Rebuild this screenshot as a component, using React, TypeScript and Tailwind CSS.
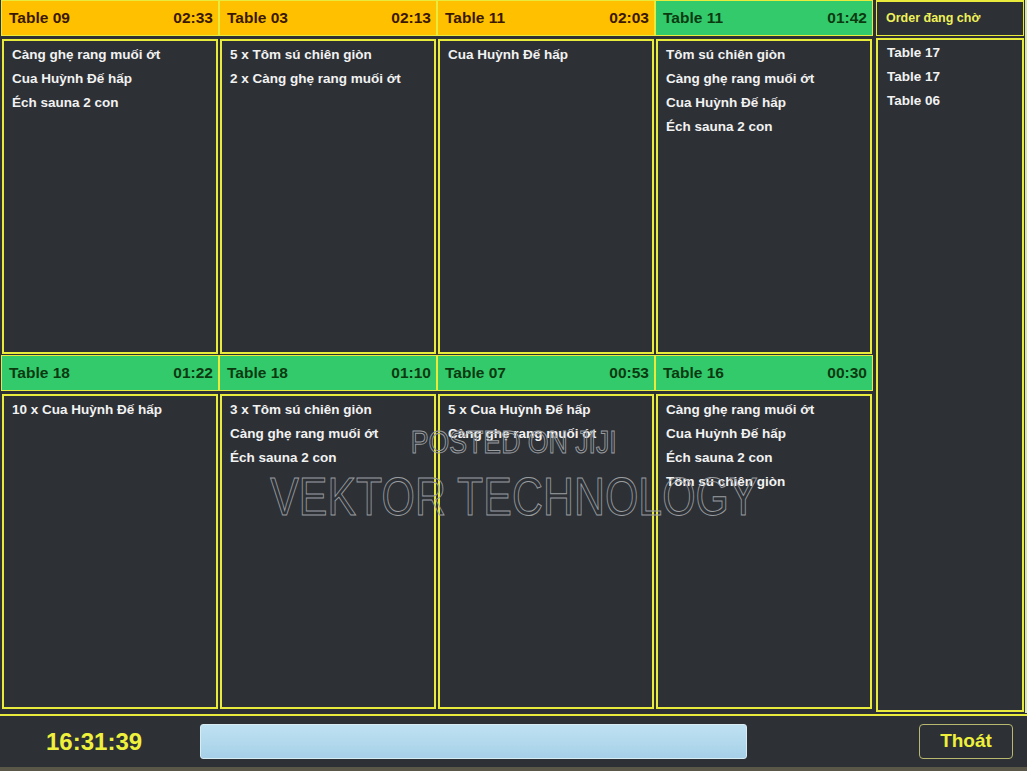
import React from "react";

type Card = { table: string; time: string; color: "amber" | "green"; items: string[] };

const cards: Card[] = [
  { table: "Table 09", time: "02:33", color: "amber", items: ["Càng ghẹ rang muối ớt", "Cua Huỳnh Đế hấp", "Éch sauna 2 con"] },
  { table: "Table 03", time: "02:13", color: "amber", items: ["5 x Tôm sú chiên giòn", "2 x Càng ghẹ rang muối ớt"] },
  { table: "Table 11", time: "02:03", color: "amber", items: ["Cua Huỳnh Đế hấp"] },
  { table: "Table 11", time: "01:42", color: "green", items: ["Tôm sú chiên giòn", "Càng ghẹ rang muối ớt", "Cua Huỳnh Đế hấp", "Éch sauna 2 con"] },
  { table: "Table 18", time: "01:22", color: "green", items: ["10 x Cua Huỳnh Đế hấp"] },
  { table: "Table 18", time: "01:10", color: "green", items: ["3 x Tôm sú chiên giòn", "Càng ghẹ rang muối ớt", "Éch sauna 2 con"] },
  { table: "Table 07", time: "00:53", color: "green", items: ["5 x Cua Huỳnh Đế hấp", "Càng ghẹ rang muối ớt"] },
  { table: "Table 16", time: "00:30", color: "green", items: ["Càng ghẹ rang muối ớt", "Cua Huỳnh Đế hấp", "Éch sauna 2 con", "Tôm sú chiên giòn"] },
];

function OrderCard({ c }: { c: Card }) {
  const amber = c.color === "amber";
  return (
    <div className="flex flex-col h-[355px]">
      <div
        className={
          "h-[36px] border border-[#e8ea3c] flex items-center justify-between pl-[7px] pr-[5px] text-[15.5px] font-bold " +
          (amber ? "bg-[#ffc000] text-[#3a1800]" : "bg-[#33ca6c] text-[#0c3a10]")
        }
      >
        <span>{c.table}</span>
        <span>{c.time}</span>
      </div>
      <div className="flex-1 mt-[3px] mx-[1px] mb-[1px] border-2 border-[#e8ea3c] bg-[#2d3136] pt-[2px] pl-[8px]">
        {c.items.map((it, i) => (
          <div key={i} className="h-[24px] leading-[24px] text-[13.5px] font-bold text-[#f2f2f2]">
            {it}
          </div>
        ))}
      </div>
    </div>
  );
}

export default function App() {
  return (
    <div
      className="relative w-[1027px] h-[771px] bg-[#2d3035] flex flex-col overflow-hidden"
      style={{ fontFamily: '"Liberation Sans", Arial, sans-serif' }}
    >
      <div className="flex h-[713px]">
        <div className="w-[874px] pl-[1px] grid grid-cols-[repeat(4,218px)] content-start">
          {cards.map((c, i) => (
            <OrderCard key={i} c={c} />
          ))}
        </div>
        <div className="w-[148px] ml-[2px] flex flex-col">
          <div className="h-[36px] border border-[#e8ea3c] border-t-2 flex items-center pl-[9px] text-[12.5px] font-bold text-[#eef05a]">
            Order đang chờ
          </div>
          <div className="flex-1 mt-[2px] border-2 border-[#e8ea3c] bg-[#2d3136] pt-[1px] pl-[9px] mb-[1px]">
            {["Table 17", "Table 17", "Table 06"].map((t, i) => (
              <div key={i} className="h-[24px] leading-[24px] text-[13.5px] font-bold text-[#f2f2f2]">
                {t}
              </div>
            ))}
          </div>
        </div>
        <div className="flex-1 ml-[1px] bg-[#d9e8a8]" />
      </div>
      <div className="h-[53px] border-t-2 border-[#e8ea3c] mt-[1px] flex items-center">
        <div className="w-[200px] pl-[46px] text-[24px] font-bold text-[#eef03c]">16:31:39</div>
        <div className="w-[547px] h-[35px] rounded-[3px] border border-[#d8ecf4] bg-gradient-to-b from-[#bfe2f2] to-[#a6d0e8]" />
        <div className="flex-1" />
        <button className="w-[94px] h-[35px] mr-[14px] rounded-[4px] border border-[#b8b870] text-[19px] font-bold text-[#eef03c]">
          Thoát
        </button>
      </div>
      <div className="flex-1 bg-[#5a5648]" />

      <div className="absolute left-0 top-[423px] w-[1027px] flex flex-col items-center pointer-events-none">
        <div className="text-[31px] leading-[40px] text-transparent scale-x-[0.86] [-webkit-text-stroke:1px_#9a9da0]">
          POSTED ON JIJI
        </div>
        <div className="mt-[4px] text-[53px] leading-[60px] text-transparent scale-x-[0.81] [-webkit-text-stroke:1px_#9a9da0]">
          VEKTOR TECHNOLOGY
        </div>
      </div>
    </div>
  );
}
